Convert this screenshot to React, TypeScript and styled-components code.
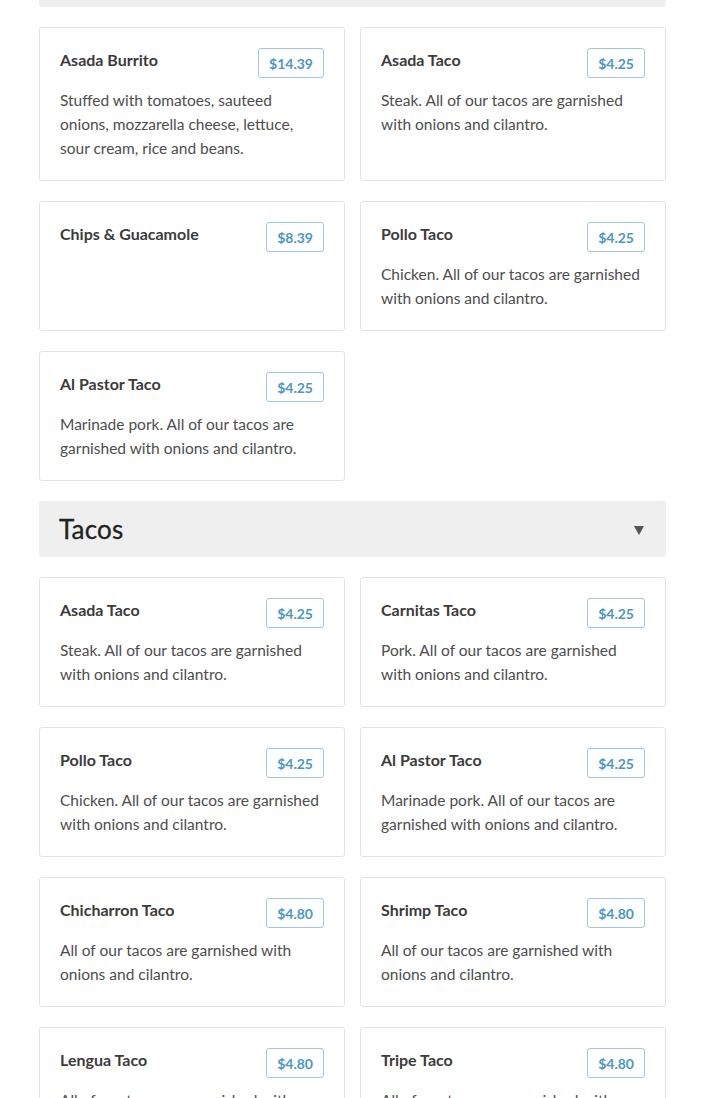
import React from "react";
import styled, { createGlobalStyle } from "styled-components";

const GlobalStyle = createGlobalStyle`
  html, body {
    margin: 0;
    padding: 0;
    background: #ffffff;
    font-family: Lato, "Open Sans", "Liberation Sans", sans-serif;
    overflow: hidden;
  }
  * {
    box-sizing: border-box;
  }
`;

type Item = {
  name: string;
  price: string;
  description?: string;
};

type Section = {
  title: string;
  items: Item[];
};

const TACO_NOTE = "All of our tacos are garnished with onions and cilantro.";

const SECTIONS: Section[] = [
  {
    title: "Popular Items",
    items: [
      {
        name: "Asada Burrito",
        price: "$14.39",
        description:
          "Stuffed with tomatoes, sauteed onions, mozzarella cheese, lettuce, sour cream, rice and beans.",
      },
      { name: "Asada Taco", price: "$4.25", description: `Steak. ${TACO_NOTE}` },
      { name: "Chips & Guacamole", price: "$8.39" },
      { name: "Pollo Taco", price: "$4.25", description: `Chicken. ${TACO_NOTE}` },
      {
        name: "Al Pastor Taco",
        price: "$4.25",
        description: `Marinade pork. ${TACO_NOTE}`,
      },
    ],
  },
  {
    title: "Tacos",
    items: [
      { name: "Asada Taco", price: "$4.25", description: `Steak. ${TACO_NOTE}` },
      { name: "Carnitas Taco", price: "$4.25", description: `Pork. ${TACO_NOTE}` },
      { name: "Pollo Taco", price: "$4.25", description: `Chicken. ${TACO_NOTE}` },
      {
        name: "Al Pastor Taco",
        price: "$4.25",
        description: `Marinade pork. ${TACO_NOTE}`,
      },
      { name: "Chicharron Taco", price: "$4.80", description: TACO_NOTE },
      { name: "Shrimp Taco", price: "$4.80", description: TACO_NOTE },
      { name: "Lengua Taco", price: "$4.80", description: TACO_NOTE },
      { name: "Tripe Taco", price: "$4.80", description: TACO_NOTE },
    ],
  },
];

const Page = styled.main`
  padding: 0 39px;
  /* the page is scrolled so only the bottom edge of the first header shows */
  margin-top: -49px;
  display: flex;
  flex-direction: column;
  gap: 20px;
`;

const SectionHeader = styled.div`
  height: 56px;
  background: #efefef;
  border-radius: 3px;
  padding: 0 22px 0 20px;
  display: flex;
  align-items: center;
  justify-content: space-between;
`;

const SectionTitle = styled.h2`
  margin: 0;
  font-size: 26px;
  font-weight: 400;
  color: #222222;
  letter-spacing: 0.2px;
  -webkit-text-stroke: 0.3px #222222;
`;

const Caret = styled.svg`
  width: 10px;
  height: 9px;
  margin-top: 2px;
`;

const Grid = styled.div`
  display: grid;
  grid-template-columns: 1fr 1fr;
  column-gap: 15px;
  row-gap: 20px;
`;

const Card = styled.div`
  border: 1px solid #e3e3e3;
  border-radius: 3px;
  background: #ffffff;
  padding: 20px;
  display: flex;
  flex-direction: column;
  gap: 10px;
`;

const CardTop = styled.div`
  display: flex;
  justify-content: space-between;
  align-items: flex-start;
  gap: 12px;
`;

const ItemName = styled.h3`
  margin: 0;
  font-size: 16px;
  line-height: 24px;
  font-weight: 700;
  color: #3b3b3b;
`;

const Price = styled.span`
  flex: none;
  height: 30px;
  padding: 0 10px;
  border: 1px solid #9fc7dd;
  border-radius: 3px;
  display: flex;
  align-items: center;
  font-size: 14px;
  font-weight: 700;
  color: #4b97c4;
`;

const Description = styled.p`
  margin: 0;
  font-size: 15.5px;
  line-height: 24px;
  color: #4d4d4d;
`;

function MenuCard({ item }: { item: Item }) {
  return (
    <Card>
      <CardTop>
        <ItemName>{item.name}</ItemName>
        <Price>{item.price}</Price>
      </CardTop>
      {item.description ? <Description>{item.description}</Description> : null}
    </Card>
  );
}

function MenuSection({ section }: { section: Section }) {
  return (
    <React.Fragment>
      <SectionHeader>
        <SectionTitle>{section.title}</SectionTitle>
        <Caret viewBox="0 0 10 9">
          <path d="M0 0 H10 L5 9 Z" fill="#555555" />
        </Caret>
      </SectionHeader>
      <Grid>
        {section.items.map((item, i) => (
          <MenuCard key={item.name + i} item={item} />
        ))}
      </Grid>
    </React.Fragment>
  );
}

export default function App() {
  return (
    <React.Fragment>
      <GlobalStyle />
      <Page>
        {SECTIONS.map((section) => (
          <MenuSection key={section.title} section={section} />
        ))}
      </Page>
    </React.Fragment>
  );
}
